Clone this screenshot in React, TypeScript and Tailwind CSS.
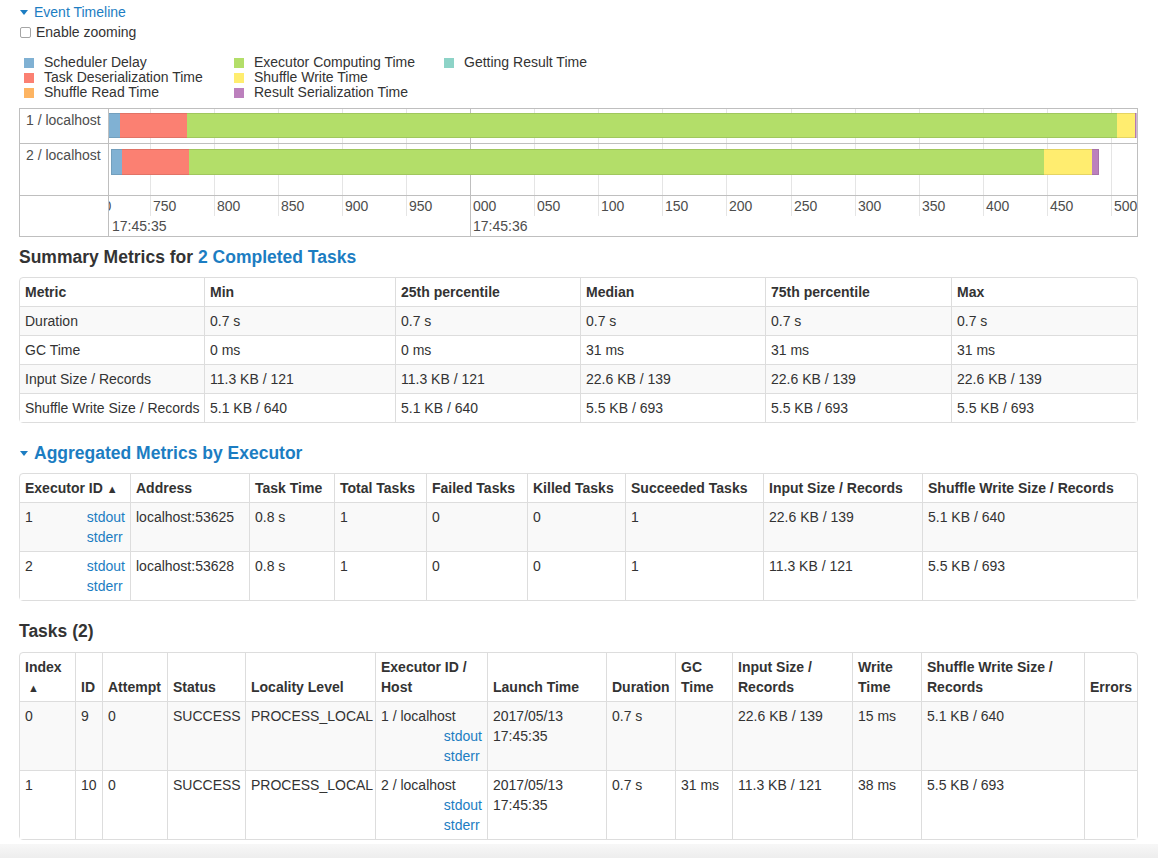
import React from "react";

type Cell = React.ReactNode;

const legendCols: [string, string][][] = [
  [
    ["bg-[#80b1d3]", "Scheduler Delay"],
    ["bg-[#fb8072]", "Task Deserialization Time"],
    ["bg-[#fdb462]", "Shuffle Read Time"],
  ],
  [
    ["bg-[#b3de69]", "Executor Computing Time"],
    ["bg-[#ffed6f]", "Shuffle Write Time"],
    ["bg-[#bc80bd]", "Result Serialization Time"],
  ],
  [["bg-[#8dd3c7]", "Getting Result Time"]],
];

const ticks = ["700", "750", "800", "850", "900", "950", "000", "050", "100", "150", "200", "250", "300", "350", "400", "450", "500"];

// bar segments in chart coords: [from, to, colour]
const bars: { y: number; h: number; segs: [number, number, string][] }[] = [
  {
    y: 4,
    h: 25,
    segs: [
      [-1, 11, "#80b1d3"],
      [11, 78, "#fb8072"],
      [78, 1008, "#b3de69"],
      [1008, 1026, "#ffed6f"],
      [1026, 1027.5, "#bc80bd"],
    ],
  },
  {
    y: 40,
    h: 26,
    segs: [
      [2, 13, "#80b1d3"],
      [13, 80, "#fb8072"],
      [80, 935, "#b3de69"],
      [935, 983, "#ffed6f"],
      [983, 990, "#bc80bd"],
    ],
  },
];

function Arrow() {
  return (
    <span className="inline-block w-0 h-0 border-l-[4px] border-r-[4px] border-t-[5px] border-l-transparent border-r-transparent border-t-[#1c7dc2] mr-[6px] align-middle relative -top-[1px]" />
  );
}

function Link({ children }: { children: React.ReactNode }) {
  return <a className="text-[#1c7dc2] cursor-pointer">{children}</a>;
}

function Logs() {
  return (
    <div className="flex flex-col">
      <Link>stdout</Link>
      <Link>stderr</Link>
    </div>
  );
}

function Timeline() {
  return (
    <div className="flex w-[1119px] border border-[#bfbfbf] text-[#4d4d4d]">
      <div className="w-[89px] border-r border-[#bfbfbf] flex flex-col">
        <div className="h-[35px] border-b border-[#bfbfbf] pl-[6px] pt-[3px] leading-[17px]">1 / localhost</div>
        <div className="h-[52px] border-b border-[#bfbfbf] pl-[6px] pt-[3px] leading-[17px]">2 / localhost</div>
        <div className="h-[40px]" />
      </div>
      <svg width="1028" height="127" className="block">
        {ticks.map((t, i) => {
          const x = Math.round(361 + 64.1 * (i - 6)) + 0.5;
          const major = t === "000";
          return (
            <line
              key={"g" + i}
              x1={x}
              x2={x}
              y1={0}
              y2={major ? 127 : 107}
              stroke={major ? "#bfbfbf" : "#e5e5e5"}
              strokeWidth={1}
            />
          );
        })}
        <line x1={0} x2={1028} y1={34.5} y2={34.5} stroke="#bfbfbf" />
        <line x1={0} x2={1028} y1={86.5} y2={86.5} stroke="#bfbfbf" />
        {bars.map((b, bi) => (
          <g key={bi}>
            {b.segs.map(([a, z, c], si) => (
              <rect key={si} x={a} y={b.y} width={z - a} height={b.h} fill={c} />
            ))}
            <rect
              x={b.segs[0][0] + 0.5}
              y={b.y + 0.5}
              width={b.segs[b.segs.length - 1][1] - b.segs[0][0] - 1}
              height={b.h - 1}
              fill="none"
              stroke="rgba(0,0,0,0.10)"
            />
          </g>
        ))}
        {ticks.map((t, i) => {
          const x = Math.round(361 + 64.1 * (i - 6)) + 3;
          return (
            <text key={"t" + i} x={x} y={102} fontSize={14} fill="#4d4d4d" fontFamily="Liberation Sans, Arial, sans-serif">
              {t}
            </text>
          );
        })}
        <text x={3} y={122} fontSize={14} fill="#4d4d4d" fontFamily="Liberation Sans, Arial, sans-serif">
          17:45:35
        </text>
        <text x={364} y={122} fontSize={14} fill="#4d4d4d" fontFamily="Liberation Sans, Arial, sans-serif">
          17:45:36
        </text>
      </svg>
    </div>
  );
}

function Table({ cols, head, rows }: { cols: number[]; head: Cell[]; rows: Cell[][] }) {
  return (
    <table className="w-[1119px] table-fixed border-separate border-spacing-0 border border-[#ddd] rounded-[4px]">
      <colgroup>
        {cols.map((w, i) => (
          <col key={i} style={{ width: w }} />
        ))}
      </colgroup>
      <thead>
        <tr>
          {head.map((h, i) => (
            <th
              key={i}
              className="px-[5px] py-[4px] text-left align-bottom font-bold border-[#ddd] border-l first:border-l-0 whitespace-nowrap"
            >
              {h}
            </th>
          ))}
        </tr>
      </thead>
      <tbody>
        {rows.map((r, ri) => (
          <tr key={ri} className={ri % 2 === 0 ? "bg-[#f9f9f9]" : "bg-white"}>
            {r.map((c, ci) => (
              <td key={ci} className="px-[5px] py-[4px] align-top border-[#ddd] border-t border-l first:border-l-0 whitespace-nowrap">
                {c}
              </td>
            ))}
          </tr>
        ))}
      </tbody>
    </table>
  );
}

const Sort = () => <span className="text-[11px] leading-none">▲</span>;

export default function App() {
  const execCell = (id: string) => (
    <div className="flex justify-between">
      <span>{id}</span>
      <Logs />
    </div>
  );
  const hostCell = (h: string) => (
    <div>
      <div>{h}</div>
      <div className="flex justify-end">
        <Logs />
      </div>
    </div>
  );
  const launch = (
    <div>
      <div>2017/05/13</div>
      <div>17:45:35</div>
    </div>
  );

  return (
    <div className="min-h-[858px] bg-white text-[#333] text-[14px] leading-[20px] font-['Liberation_Sans',Arial,sans-serif]">
      <div className="pl-[19px]">
        <div className="pt-[2px] pl-[1px] text-[#1c7dc2] leading-[20px]">
          <Arrow />
          Event Timeline
        </div>
        <div className="flex items-center leading-[20px] pl-[1px]">
          <span className="w-[11px] h-[11px] border border-[#a5a5a5] rounded-[2px] bg-white mr-[5px]" />
          Enable zooming
        </div>
        <div className="flex mt-[13px] pl-[5px] leading-[15px]">
          {legendCols.map((col, ci) => (
            <div key={ci} className="w-[210px] flex flex-col">
              {col.map(([cls, label]) => (
                <div key={label} className="flex items-center h-[15px]">
                  <span className={`w-[10px] h-[10px] mr-[10px] ${cls}`} />
                  <span>{label}</span>
                </div>
              ))}
            </div>
          ))}
        </div>
        <div className="mt-[8px]">
          <Timeline />
        </div>

        <h4 className="mt-[10px] mb-[10px] text-[17.5px] font-bold leading-[20px]">
          Summary Metrics for <Link>2 Completed Tasks</Link>
        </h4>
        <Table
          cols={[184, 191, 185, 185, 186, 186]}
          head={["Metric", "Min", "25th percentile", "Median", "75th percentile", "Max"]}
          rows={[
            ["Duration", "0.7 s", "0.7 s", "0.7 s", "0.7 s", "0.7 s"],
            ["GC Time", "0 ms", "0 ms", "31 ms", "31 ms", "31 ms"],
            ["Input Size / Records", "11.3 KB / 121", "11.3 KB / 121", "22.6 KB / 139", "22.6 KB / 139", "22.6 KB / 139"],
            ["Shuffle Write Size / Records", "5.1 KB / 640", "5.1 KB / 640", "5.5 KB / 693", "5.5 KB / 693", "5.5 KB / 693"],
          ]}
        />

        <h4 className="mt-[20px] mb-[10px] pl-[1px] text-[17.5px] font-bold leading-[20px] text-[#1c7dc2]">
          <Arrow />
          Aggregated Metrics by Executor
        </h4>
        <Table
          cols={[110, 119, 85, 92, 101, 98, 138, 159, 215]}
          head={[
            <>Executor ID <Sort /></>,
            "Address",
            "Task Time",
            "Total Tasks",
            "Failed Tasks",
            "Killed Tasks",
            "Succeeded Tasks",
            "Input Size / Records",
            "Shuffle Write Size / Records",
          ]}
          rows={[
            [execCell("1"), "localhost:53625", "0.8 s", "1", "0", "0", "1", "22.6 KB / 139", "5.1 KB / 640"],
            [execCell("2"), "localhost:53628", "0.8 s", "1", "0", "0", "1", "11.3 KB / 121", "5.5 KB / 693"],
          ]}
        />

        <h4 className="mt-[20px] mb-[11px] text-[17.5px] font-bold leading-[20px]">Tasks (2)</h4>
        <Table
          cols={[55, 27, 65, 78, 130, 112, 119, 69, 57, 120, 69, 163, 53]}
          head={[
            <>Index<br /><span className="pl-[3px]"><Sort /></span></>,
            "ID",
            "Attempt",
            "Status",
            "Locality Level",
            <>Executor ID /<br />Host</>,
            "Launch Time",
            "Duration",
            <>GC<br />Time</>,
            <>Input Size /<br />Records</>,
            <>Write<br />Time</>,
            <>Shuffle Write Size /<br />Records</>,
            "Errors",
          ]}
          rows={[
            ["0", "9", "0", "SUCCESS", "PROCESS_LOCAL", hostCell("1 / localhost"), launch, "0.7 s", "", "22.6 KB / 139", "15 ms", "5.1 KB / 640", ""],
            ["1", "10", "0", "SUCCESS", "PROCESS_LOCAL", hostCell("2 / localhost"), launch, "0.7 s", "31 ms", "11.3 KB / 121", "38 ms", "5.5 KB / 693", ""],
          ]}
        />
      </div>
      <div className="mt-[4px] h-[16px] bg-gradient-to-b from-[#f7f7f7] to-[#ececec]" />
    </div>
  );
}
